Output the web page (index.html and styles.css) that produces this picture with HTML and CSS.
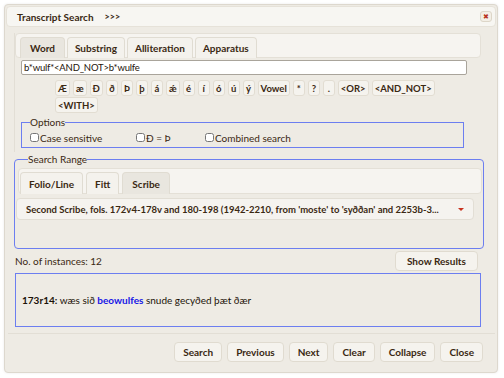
FILE: index.html
```html
<!DOCTYPE html>
<html lang="en">
<head>
  <meta charset="UTF-8" />
  <title>Transcript Search</title>
  <link rel="stylesheet" href="styles.css">
</head>
<body>
  <div class="dialog">
    <div class="titlebar">
      <span class="title">Transcript Search</span>
      <span class="title-more">&gt;&gt;&gt;</span>
      <button class="close" title="Close">&#x2716;</button>
    </div>

    <div class="content">
      <div class="tabs">
        <ul class="tab-nav">
          <li class="tab active">Word</li>
          <li class="tab">Substring</li>
          <li class="tab">Alliteration</li>
          <li class="tab">Apparatus</li>
        </ul>
        <div class="tab-panel">
          <input class="query" type="text" value="b*wulf*<AND_NOT>b*wulfe" />
          <div class="chars">
            <div class="char-row">
              <button class="char">Æ</button><button class="char">æ</button><button class="char">Ð</button><button class="char">ð</button><button class="char">Þ</button><button class="char">þ</button><button class="char">á</button><button class="char">ǽ</button><button class="char">é</button><button class="char">í</button><button class="char">ó</button><button class="char">ú</button><button class="char">ý</button><button class="char">Vowel</button><button class="char">*</button><button class="char">?</button><button class="char">.</button><button class="char">&lt;OR&gt;</button><button class="char">&lt;AND_NOT&gt;</button>
            </div>
            <div class="char-row">
              <button class="char">&lt;WITH&gt;</button>
            </div>
          </div>
          <fieldset class="options">
            <legend>Options</legend>
            <label class="opt opt-case"><input type="checkbox" />Case sensitive</label>
            <label class="opt opt-eth"><input type="checkbox" />Ð = Þ</label>
            <label class="opt"><input type="checkbox" />Combined search</label>
          </fieldset>
        </div>
      </div>

      <fieldset class="range">
        <legend>Search Range</legend>
        <ul class="tab-nav range-nav">
          <li class="tab">Folio/Line</li>
          <li class="tab">Fitt</li>
          <li class="tab active">Scribe</li>
        </ul>
        <div class="select">
          <span class="select-text">Second Scribe, fols. 172v4-178v and 180-198 (1942-2210, from 'moste' to 'syððan' and 2253b-3...</span>
          <span class="select-arrow"></span>
        </div>
      </fieldset>

      <div class="count-row">
        <span class="count">No. of instances: 12</span>
        <button class="btn btn-wide">Show Results</button>
      </div>

      <div class="results">
        <p class="hit"><b>173r14:</b> wæs sið <span class="match">beowulfes</span> snude gecyðed þæt ðær</p>
      </div>
    </div>

    <div class="buttonpane">
      <button class="btn">Search</button>
      <button class="btn">Previous</button>
      <button class="btn">Next</button>
      <button class="btn">Clear</button>
      <button class="btn">Collapse</button>
      <button class="btn">Close</button>
    </div>
  </div>
</body>
</html>
```

FILE: styles.css
```css
* { box-sizing: border-box; }
body {
  margin: 0;
  background: #ffffff;
  font-family: Lato, "Liberation Sans", sans-serif;
  font-size: 10px;
  color: #3a2812;
}
button {
  margin: 0;
  font-family: inherit;
  color: inherit;
  cursor: pointer;
}
.dialog {
  margin: 4px;
  width: 494px;
  height: 369px;
  background: #eeebe4;
  border: 1px solid #ddd8ce;
  border-radius: 4px;
  box-shadow: 0 0 3px rgba(0,0,0,0.08);
  display: flex;
  flex-direction: column;
}
.titlebar {
  margin: 1px;
  height: 21px;
  background: #f7f6f2;
  border: 1px solid #e6e2d9;
  border-radius: 4px;
  display: flex;
  align-items: center;
  padding: 0 3px 0 10px;
  font-weight: bold;
  font-size: 10px;
}
.title-more {
  margin-left: 11px;
  font-size: 9px;
}
.close {
  margin-left: auto;
  width: 12px;
  height: 11px;
  padding: 0;
  border: 1px solid #ddd6c8;
  border-radius: 3px;
  background: #f3efe6;
  color: #b8321c;
  font-size: 7px;
  line-height: 9px;
  text-align: center;
}
.content {
  padding: 5px 13px 0 9px;
  flex: 1;
}

/* tabs */
.tab-nav {
  list-style: none;
  margin: 0;
  padding: 3px 0 0 4px;
  height: 25px;
  display: flex;
  gap: 2px;
  background: #f6f4f0;
  border: 1px solid #e4e0d7;
  border-radius: 4px;
}
.tab {
  height: 21px;
  padding: 0 7px;
  display: flex;
  align-items: center;
  font-weight: bold;
  font-size: 10px;
  background: #f4f2ed;
  border: 1px solid #e0dcd2;
  border-bottom: none;
  border-radius: 4px 4px 0 0;
}
.tab.active {
  background: #e9e6df;
  padding: 0 9px;
}
.tabs {
  margin-right: 3px;
  border-left: 1px solid #e2ded5;
}
.tab-panel {
  padding: 2px 0 4px 6px;
}
.query {
  display: block;
  width: 446px;
  height: 15px;
  margin: 0;
  padding: 0 2px;
  border: 1px solid #a9a49b;
  border-radius: 2px;
  background: #ffffff;
  font-family: inherit;
  font-size: 9.5px;
  letter-spacing: -0.2px;
  color: #1e140a;
}
.chars {
  margin: 5px 0 0 34px;
  display: flex;
  flex-direction: column;
  gap: 1px;
}
.char-row {
  display: flex;
  gap: 3px;
}
.char {
  height: 16px;
  min-width: 12px;
  padding: 0 2px;
  border: 1px solid #e2ddd2;
  border-radius: 3px;
  background: #f5f3ee;
  font-weight: bold;
  font-size: 9.5px;
}

/* fieldsets */
fieldset {
  margin: 0;
  padding: 0;
  border: 1.5px solid #6c7ef0;
}
legend {
  padding: 0;
  font-size: 10px;
  line-height: 11px;
}
.options {
  margin: 4px 17px 0 0;
  height: 31px;
  padding: 0 0 0 8px;
  display: flex;
  align-items: center;
}
.opt {
  display: flex;
  align-items: center;
  font-size: 10px;
}
.opt input {
  margin: 0 1px 0 0;
  width: 9px;
  height: 9px;
}
.opt-case { width: 106px; }
.opt-eth { width: 69px; }

.range {
  margin-top: 2px;
  height: 95px;
  padding: 0 1px 0 3px;
  border-radius: 4px;
}
.range legend { margin-left: 10px; }
.range-nav {
  margin-top: 3px;
  height: 26px;
  padding-left: 1px;
  gap: 3px;
}
.range-nav .tab { padding: 0 8px; height: 22px; }
.range-nav .tab.active { padding: 0 9px; }
.select {
  margin: 4px 8px 0 -2px;
  height: 22px;
  padding: 0 0 0 9px;
  display: flex;
  align-items: center;
  background: #f5f3ef;
  border: 1px solid #e2ded5;
  border-radius: 4px;
  font-weight: bold;
  font-size: 9.5px;
}
.select-text {
  flex: 1;
  white-space: nowrap;
  overflow: hidden;
}
.select-arrow {
  width: 0;
  height: 0;
  margin: 0 9px 0 12px;
  border-left: 3px solid transparent;
  border-right: 3px solid transparent;
  border-top: 3px solid #c8321e;
}

.count-row {
  margin-top: 2px;
  display: flex;
  align-items: center;
  justify-content: space-between;
  padding-right: 6px;
}
.count { font-size: 10px; margin-left: 1px; }
.btn {
  height: 20px;
  min-width: 39px;
  padding: 0 8px;
  border: 1px solid #e0dbd0;
  border-radius: 4px;
  background: #f5f3ee;
  font-weight: bold;
  font-size: 10px;
}
.btn-wide { padding: 0 11px; }
.results {
  margin: 2px 3px 0 1px;
  height: 54px;
  border: 1.5px solid #6c7ef0;
  display: flex;
  align-items: center;
  padding: 0 6px;
}
.hit {
  margin: 0;
  font-size: 10px;
  color: #1b1208;
}
.match {
  color: #1616e6;
  font-weight: bold;
}

.buttonpane {
  margin: 0 2px 0 3px;
  border-top: 1px solid #e2ded5;
  padding: 8px 12px 10px 0;
  display: flex;
  justify-content: flex-end;
  gap: 5px;
}
```
